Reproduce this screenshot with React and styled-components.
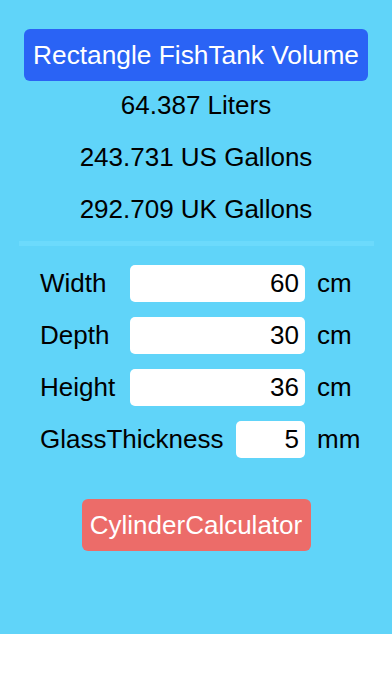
import styled, { createGlobalStyle } from "styled-components";

const GlobalStyle = createGlobalStyle`
  html, body {
    margin: 0;
    padding: 0;
    background: #ffffff;
  }
  body {
    font-family: "Liberation Sans", Arial, sans-serif;
  }
`;

const Screen = styled.div`
  width: 392px;
  height: 696px;
  background: #ffffff;
  overflow: hidden;
`;

const Panel = styled.div`
  height: 634px;
  background: #60d4f9;
  display: flex;
  flex-direction: column;
  align-items: center;
  padding-top: 29px;
  box-sizing: border-box;
`;

const TitleButton = styled.button`
  width: 344px;
  height: 52px;
  border: none;
  border-radius: 6px;
  background: #2a63f5;
  color: #ffffff;
  font-family: "Liberation Sans", Arial, sans-serif;
  font-size: 26.3px;
  padding: 0;
`;

const Results = styled.div`
  display: flex;
  flex-direction: column;
  align-items: center;
  margin-top: -2px;
`;

const ResultLine = styled.div`
  height: 52px;
  line-height: 52px;
  font-size: 26px;
  color: #000000;
`;

const Divider = styled.div`
  width: 355px;
  height: 5px;
  margin-top: 6px;
  background: #6cdafc;
`;

const Form = styled.div`
  width: 100%;
  display: flex;
  flex-direction: column;
  gap: 15px;
  margin-top: 19px;
`;

const Row = styled.div`
  display: flex;
  align-items: center;
  height: 37px;
  padding: 0 25px 0 40px;
`;

const Label = styled.div`
  flex: 1;
  font-size: 26px;
  color: #000000;
  white-space: nowrap;
`;

const Field = styled.input`
  width: ${(p) => p.$width}px;
  height: 37px;
  box-sizing: border-box;
  border: none;
  border-radius: 5px;
  background: #ffffff;
  padding: 0 6px 0 0;
  text-align: right;
  font-family: "Liberation Sans", Arial, sans-serif;
  font-size: 26px;
  color: #000000;
  outline: none;
`;

const Unit = styled.div`
  width: 50px;
  margin-left: 12px;
  font-size: 26px;
  color: #000000;
`;

const CylinderButton = styled.button`
  margin-top: 41px;
  height: 52px;
  width: 229px;
  border: none;
  border-radius: 6px;
  background: #ec6c69;
  color: #ffffff;
  font-family: "Liberation Sans", Arial, sans-serif;
  font-size: 26px;
  padding: 0;
`;

const results = ["64.387 Liters", "243.731 US Gallons", "292.709 UK Gallons"];

const fields = [
  { label: "Width", value: "60", unit: "cm", width: 175 },
  { label: "Depth", value: "30", unit: "cm", width: 175 },
  { label: "Height", value: "36", unit: "cm", width: 175 },
  { label: "GlassThickness", value: "5", unit: "mm", width: 69 },
];

export default function App() {
  return (
    <>
      <GlobalStyle />
      <Screen>
        <Panel>
          <TitleButton>Rectangle FishTank Volume</TitleButton>
          <Results>
            {results.map((r) => (
              <ResultLine key={r}>{r}</ResultLine>
            ))}
          </Results>
          <Divider />
          <Form>
            {fields.map((f) => (
              <Row key={f.label}>
                <Label>{f.label}</Label>
                <Field $width={f.width} defaultValue={f.value} />
                <Unit>{f.unit}</Unit>
              </Row>
            ))}
          </Form>
          <CylinderButton>CylinderCalculator</CylinderButton>
        </Panel>
      </Screen>
    </>
  );
}
